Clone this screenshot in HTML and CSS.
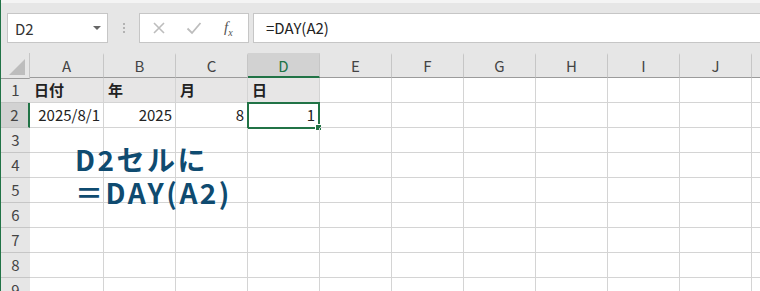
FILE: index.html
```html
<!DOCTYPE html>
<html>
<head>
    <title>DAY関数</title>
    <link rel="stylesheet" href="styles.css">
</head>
<body>
    <div class="window">
        <!-- Formula bar -->
        <div class="toolbar">
            <div class="name-box">
                <span>D2</span>
                <span class="drop"></span>
            </div>
            <div class="grip"><i></i><i></i><i></i></div>
            <div class="fx-box">
                <svg class="ico" width="14" height="14" viewBox="0 0 14 14"><path d="M2 2 L12 12 M12 2 L2 12" stroke="#bdbdbd" stroke-width="1.6" fill="none"/></svg>
                <svg class="ico" width="16" height="14" viewBox="0 0 16 14"><path d="M1.5 7.5 L6 12 L14.5 2" stroke="#bdbdbd" stroke-width="1.8" fill="none"/></svg>
                <span class="fx">f<sub>x</sub></span>
            </div>
            <div class="formula">=DAY(A2)</div>
        </div>

        <!-- Sheet -->
        <div class="sheet">
            <div class="grid">
                <div class="corner"><span class="tri"></span></div>
                <div class="col-h">A</div>
                <div class="col-h">B</div>
                <div class="col-h">C</div>
                <div class="col-h sel">D</div>
                <div class="col-h">E</div>
                <div class="col-h">F</div>
                <div class="col-h">G</div>
                <div class="col-h">H</div>
                <div class="col-h">I</div>
                <div class="col-h">J</div>
                <div class="col-h">K</div>

                <div class="row-h">1</div>
                <div class="cell head">日付</div>
                <div class="cell head">年</div>
                <div class="cell head">月</div>
                <div class="cell head">日</div>
                <div class="cell"></div><div class="cell"></div><div class="cell"></div><div class="cell"></div><div class="cell"></div><div class="cell"></div><div class="cell"></div>

                <div class="row-h sel">2</div>
                <div class="cell num">2025/8/1</div>
                <div class="cell num">2025</div>
                <div class="cell num">8</div>
                <div class="cell num active">1<span class="handle"></span></div>
                <div class="cell"></div><div class="cell"></div><div class="cell"></div><div class="cell"></div><div class="cell"></div><div class="cell"></div><div class="cell"></div>
            </div>
            <div class="grid" id="emptyRows"></div>

            <div class="note">D2セルに<br>＝DAY(A2)</div>
        </div>
    </div>

    <script>
        const rows = document.getElementById('emptyRows');
        for (let r = 3; r <= 9; r++) {
            let html = `<div class="row-h">${r}</div>`;
            for (let c = 0; c < 11; c++) {
                html += '<div class="cell"></div>';
            }
            rows.innerHTML += html;
        }
    </script>
</body>
</html>
```

FILE: styles.css
```css
body {
    margin: 0;
    background-color: #fff;
    font-family: "Noto Sans CJK JP", "Noto Sans", sans-serif;
    color: #222;
    overflow: hidden;
}
.window {
    border-left: 1px solid #217346;
    height: 291px;
    overflow: hidden;
}
.toolbar {
    height: 53px;
    box-sizing: border-box;
    background-color: #e6e6e6;
    border-top: 3px solid #f4f4f4;
    display: flex;
    align-items: flex-start;
    padding-top: 10px;
    padding-left: 6px;
}
.name-box {
    width: 101px;
    height: 30px;
    box-sizing: border-box;
    background-color: #fff;
    border: 1px solid #c6c6c6;
    display: flex;
    align-items: center;
    justify-content: space-between;
    padding: 0 6px 0 7px;
    font-size: 15px;
    color: #333;
}
.drop {
    width: 0;
    height: 0;
    border-left: 4px solid transparent;
    border-right: 4px solid transparent;
    border-top: 4px solid #666;
}
.grip {
    width: 31px;
    height: 30px;
    display: flex;
    flex-direction: column;
    align-items: center;
    justify-content: center;
    gap: 2px;
}
.grip i {
    width: 2px;
    height: 2px;
    background-color: #b3b3b3;
}
.fx-box {
    width: 110px;
    height: 30px;
    box-sizing: border-box;
    background-color: #fff;
    border: 1px solid #c6c6c6;
    display: flex;
    align-items: center;
    padding-left: 12px;
    gap: 20px;
}
.fx {
    font-family: "Liberation Serif", serif;
    font-style: italic;
    font-size: 15px;
    color: #555;
    margin-left: 2px;
}
.fx sub {
    font-size: 10px;
}
.formula {
    flex: 1;
    margin-left: 4px;
    height: 30px;
    box-sizing: border-box;
    background-color: #fff;
    border: 1px solid #c6c6c6;
    border-right: none;
    padding-left: 12px;
    font-size: 15px;
    line-height: 28px;
    color: #222;
}
.sheet {
    position: relative;
}
.grid {
    display: grid;
    grid-template-columns: 29px 74px repeat(10, 72px);
    grid-auto-rows: 25px;
}
.corner {
    height: 25px;
    background-color: #e6e6e6;
    border-right: 1px solid #c6c6c6;
    border-bottom: 1px solid #9b9b9b;
    position: relative;
}
.tri {
    position: absolute;
    right: 4px;
    bottom: 3px;
    width: 0;
    height: 0;
    border-left: 16px solid transparent;
    border-bottom: 16px solid #bdbdbd;
}
.col-h {
    height: 25px;
    box-sizing: border-box;
    background-color: #e6e6e6;
    border-right: 1px solid #c6c6c6;
    border-bottom: 1px solid #9b9b9b;
    border-top: 2px solid #e6e6e6;
    text-align: center;
    font-size: 15px;
    line-height: 22px;
    color: #444;
}
.col-h.sel {
    background-color: #d2d2d2;
    border-top-color: #d2d2d2;
    border-bottom: 2px solid #217346;
    color: #217346;
}
.row-h {
    box-sizing: border-box;
    background-color: #e6e6e6;
    border-bottom: 1px solid #c6c6c6;
    text-align: center;
    font-size: 15px;
    line-height: 24px;
    color: #444;
}
.row-h.sel {
    background-color: #d2d2d2;
    border-right: 2px solid #217346;
}
.cell {
    box-sizing: border-box;
    border-right: 1px solid #d4d4d4;
    border-bottom: 1px solid #d4d4d4;
    font-size: 15px;
    line-height: 24px;
    padding: 0 3px 0 4px;
    white-space: nowrap;
    position: relative;
}
.head {
    background-color: #e7e6e6;
    font-weight: bold;
}
.num {
    text-align: right;
}
.active {
    border: 2px solid #217346;
    margin: -1px 0 0 -1px;
    height: 27px;
    line-height: 22px;
}
.handle {
    position: absolute;
    right: -4px;
    bottom: -4px;
    width: 5px;
    height: 5px;
    background-color: #217346;
    border: 1px solid #fff;
}
.note {
    position: absolute;
    left: 74px;
    top: 90px;
    font-size: 28px;
    font-weight: bold;
    line-height: 33px;
    letter-spacing: 2.5px;
    color: #0f4b70;
}
```
